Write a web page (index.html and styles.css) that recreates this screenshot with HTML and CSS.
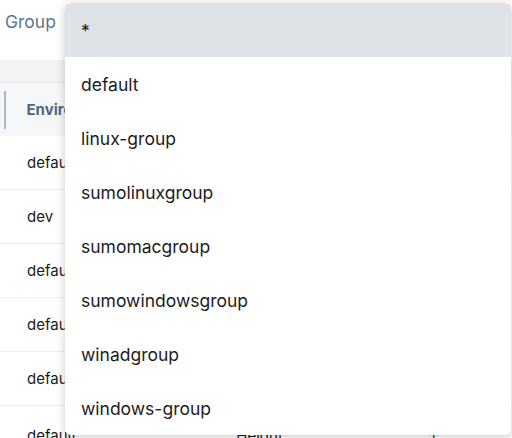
FILE: index.html
```html
<!DOCTYPE html>
<html>
<head>
<meta charset="utf-8">
<link rel="stylesheet" href="styles.css">
</head>
<body>
<div class="page">
  <div class="filter">
    <span class="label">Group</span>
  </div>
  <div class="band"></div>
  <div class="thead">
    <span class="bar"></span>
    <span class="th">Environment</span>
  </div>
  <div class="row"><span class="cell">default</span></div>
  <div class="row"><span class="cell">dev</span></div>
  <div class="row"><span class="cell">default</span></div>
  <div class="row"><span class="cell">default</span></div>
  <div class="row"><span class="cell">default</span></div>
  <div class="row last"><span class="cell">default</span><span class="cell2">Height</span><span class="cell3">↑</span></div>
</div>
<ul class="menu">
  <li class="item active">*</li>
  <li class="item">default</li>
  <li class="item">linux-group</li>
  <li class="item">sumolinuxgroup</li>
  <li class="item">sumomacgroup</li>
  <li class="item">sumowindowsgroup</li>
  <li class="item">winadgroup</li>
  <li class="item">windows-group</li>
</ul>
</body>
</html>
```
FILE: styles.css
```css
html, body {
  margin: 0;
  padding: 0;
  background: #ffffff;
  overflow: hidden;
  height: 438px;
}
body {
  font-family: Inter, "Liberation Sans", sans-serif;
  position: relative;
}
.page {
  display: flex;
  flex-direction: column;
}
.filter {
  height: 60px;
  display: flex;
  align-items: flex-start;
  padding: 11px 0 0 5px;
  box-sizing: border-box;
}
.label {
  font-size: 17.5px;
  line-height: 22px;
  color: #5b7594;
}
.band {
  height: 22px;
  background: #f2f3f5;
  border-bottom: 1px solid #e6e8eb;
}
.thead {
  height: 53px;
  background: #f6f7f9;
  display: flex;
  align-items: center;
  gap: 21px;
  padding-left: 4px;
}
.bar {
  width: 1.5px;
  height: 38px;
  background: #a9bccf;
}
.th {
  font-size: 15px;
  font-weight: 700;
  color: #4f6680;
}
.row {
  height: 53px;
  border-bottom: 1px solid #eceef1;
  display: flex;
  align-items: center;
  padding-left: 27px;
  font-size: 15px;
  color: #1b1b1b;
}
.row.last {
  align-items: flex-start;
  padding-top: 20px;
  box-sizing: border-box;
}
.cell2 { margin-left: 160px; }
.cell3 { margin-left: auto; margin-right: 72px; }
.menu {
  position: absolute;
  left: 65px;
  top: 3px;
  width: 446px;
  margin: 0;
  padding: 0;
  list-style: none;
  background: #fff;
  border-radius: 6px;
  box-shadow: 0 2px 10px rgba(0, 0, 0, 0.22);
  overflow: hidden;
}
.item {
  height: 54px;
  display: flex;
  align-items: center;
  padding-left: 16px;
  font-size: 17.5px;
  color: #1c1c1c;
}
.item.active {
  background: #dfe2e6;
}
```
